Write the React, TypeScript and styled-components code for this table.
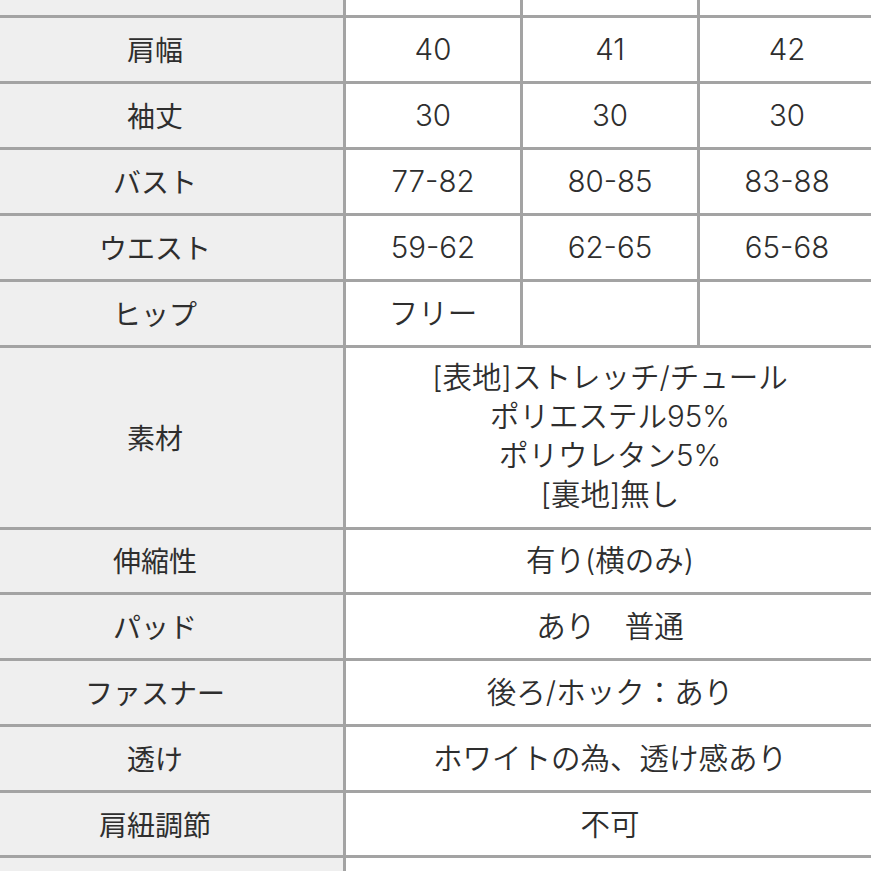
import React from "react";
import styled, { createGlobalStyle } from "styled-components";

const Global = createGlobalStyle`
  html, body { margin: 0; padding: 0; background: #ffffff; }
  body { overflow: hidden; width: 871px; height: 871px; }
`;

const Viewport = styled.div`
  width: 871px;
  height: 871px;
  overflow: hidden;
  background: #ffffff;
`;

const Grid = styled.div`
  display: grid;
  grid-template-columns: 376px 174px 174px 174px;
  grid-template-rows: repeat(5, 63px) 62.5px 179px repeat(6, 62.8px);
  gap: 3px;
  background: #a3a3a3;
  margin-left: -33px;
  margin-top: -48px;
  width: max-content;
  font-family: "Inter", "Noto Sans CJK JP", sans-serif;
  font-weight: 350;
  font-size: 29.5px;
  color: #2e2e2e;
`;

const Cell = styled.div<{ $head?: boolean; $span?: number }>`
  background: ${(p) => (p.$head ? "#efefef" : "#ffffff")};
  grid-column: ${(p) => (p.$span ? `span ${p.$span}` : "auto")};
  display: flex;
  align-items: center;
  justify-content: center;
  text-align: center;
  line-height: 39px;
  white-space: nowrap;
`;

const Label = styled.span`
  font-family: "Noto Sans CJK JP", sans-serif;
  font-weight: 400;
  font-size: 28px;
`;

const Lines = styled.div`
  display: flex;
  flex-direction: column;
  align-items: center;
  margin-top: -2px;
`;

type Row = { label: string; values?: string[]; merged?: React.ReactNode };

const rows: Row[] = [
  { label: "", values: ["", "", ""] },
  { label: "肩幅", values: ["40", "41", "42"] },
  { label: "袖丈", values: ["30", "30", "30"] },
  { label: "バスト", values: ["77-82", "80-85", "83-88"] },
  { label: "ウエスト", values: ["59-62", "62-65", "65-68"] },
  { label: "ヒップ", values: ["フリー", "", ""] },
  {
    label: "素材",
    merged: (
      <Lines>
        <div>[表地]ストレッチ/チュール</div>
        <div>ポリエステル95%</div>
        <div>ポリウレタン5%</div>
        <div>[裏地]無し</div>
      </Lines>
    ),
  },
  { label: "伸縮性", merged: "有り(横のみ)" },
  { label: "パッド", merged: "あり　普通" },
  { label: "ファスナー", merged: "後ろ/ホック：あり" },
  { label: "透け", merged: "ホワイトの為、透け感あり" },
  { label: "肩紐調節", merged: "不可" },
  { label: "", merged: "" },
];

export default function App() {
  return (
    <Viewport>
      <Global />
      <Grid>
        {rows.map((r, i) => (
          <React.Fragment key={i}>
            <Cell $head>
              <Label>{r.label}</Label>
            </Cell>
            {r.values
              ? r.values.map((v, j) => <Cell key={j}>{v}</Cell>)
              : <Cell $span={3}>{r.merged}</Cell>}
          </React.Fragment>
        ))}
      </Grid>
    </Viewport>
  );
}
